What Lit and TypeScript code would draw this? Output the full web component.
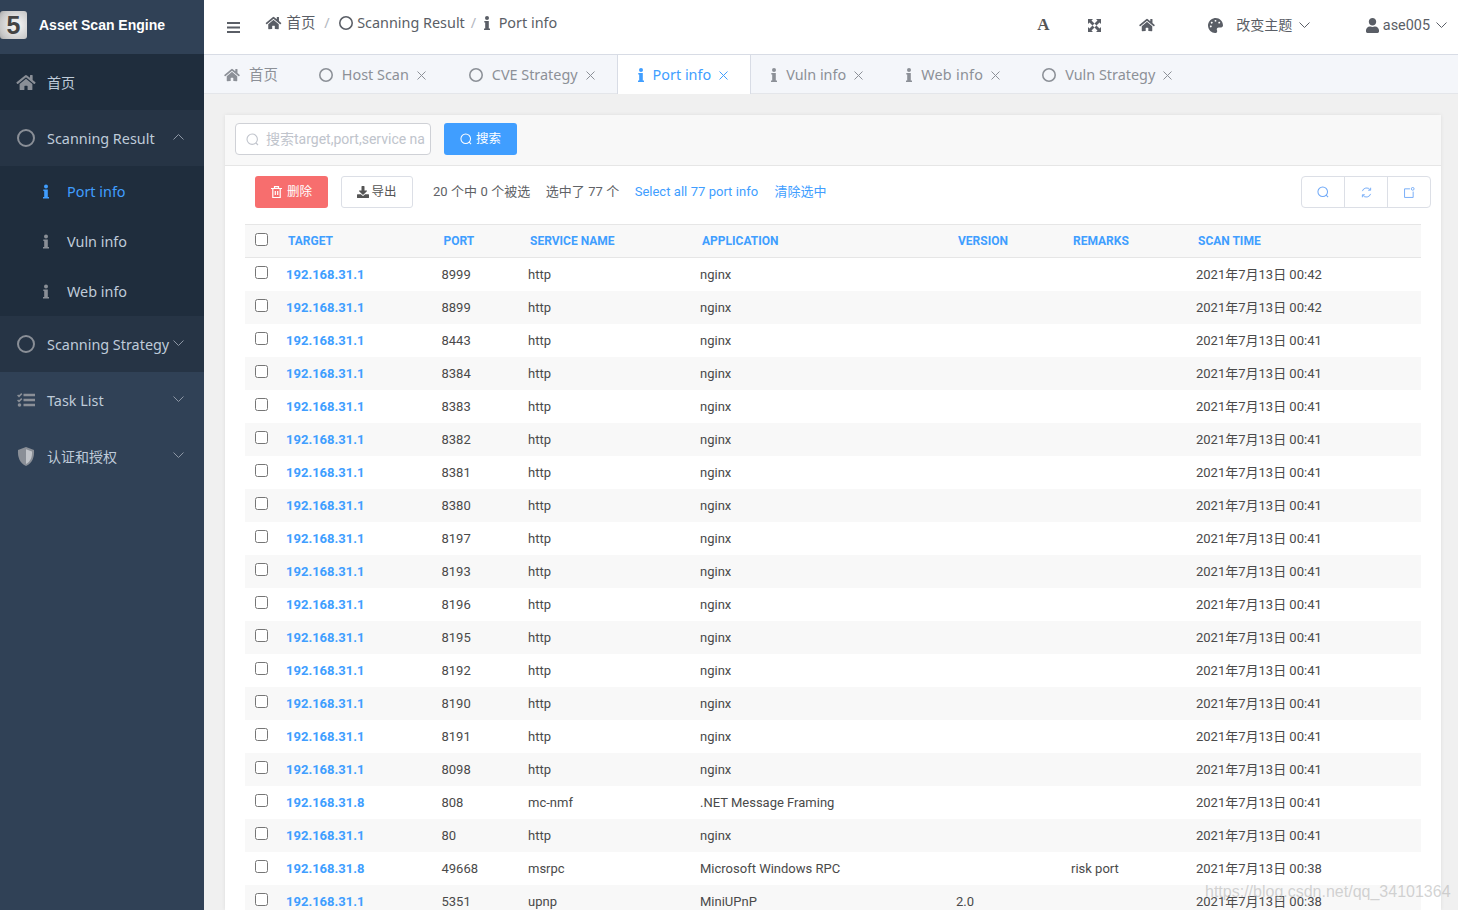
import { LitElement, html, css, svg } from 'lit';
import { customElement } from 'lit/decorators.js';

const HOME = svg`<path d="M280.37 148.26L96 300.11V464a16 16 0 0 0 16 16l112.06-.29a16 16 0 0 0 15.92-16V368a16 16 0 0 1 16-16h64a16 16 0 0 1 16 16v95.64a16 16 0 0 0 16 16.05L464 480a16 16 0 0 0 16-16V300L295.67 148.26a12.19 12.19 0 0 0-15.3 0zM571.6 251.47L488 182.56V44.05a12 12 0 0 0-12-12h-56a12 12 0 0 0-12 12v72.61L318.47 43a48 48 0 0 0-61 0L4.34 251.47a12 12 0 0 0-1.6 16.9l25.5 31A12 12 0 0 0 45.15 301l235.22-193.74a12.19 12.19 0 0 1 15.3 0L530.9 301a12 12 0 0 0 16.9-1.6l25.5-31a12 12 0 0 0-1.7-16.93z"/>`;
const USER = svg`<path d="M224 256c70.7 0 128-57.3 128-128S294.7 0 224 0 96 57.3 96 128s57.3 128 128 128zm89.6 32h-16.7c-22.2 10.2-46.9 16-72.9 16s-50.6-5.8-72.9-16h-16.7C60.2 288 0 348.2 0 422.4V464c0 26.5 21.5 48 48 48h352c26.5 0 48-21.5 48-48v-41.6c0-74.2-60.2-134.4-134.4-134.4z"/>`;
const DOWNLOAD = svg`<path d="M216 0h80c13.3 0 24 10.7 24 24v168h87.7c17.8 0 26.7 21.5 14.1 34.1L269.7 378.3c-7.5 7.5-19.8 7.5-27.3 0L90.1 226.1c-12.6-12.6-3.7-34.1 14.1-34.1H192V24c0-13.3 10.7-24 24-24zm296 376v112c0 13.3-10.7 24-24 24H24c-13.3 0-24-10.7-24-24V376c0-13.3 10.7-24 24-24h146.7l49 49c20.1 20.1 52.5 20.1 72.6 0l49-49H488c13.3 0 24 10.7 24 24z"/>`;
const PALETTE = svg`<path d="M204.3 5C104.9 24.4 24.8 104.3 5.2 203.4c-37 187 131.7 326.4 258.8 306.7 41.2-6.4 61.4-54.6 42.5-91.7-23.1-45.4 9.9-98.4 60.9-98.4h79.7c35.8 0 64.8-29.6 64.9-65.3C511.5 97.1 368.1-26.9 204.3 5zM96 320c-17.7 0-32-14.3-32-32s14.3-32 32-32 32 14.3 32 32-14.3 32-32 32zm32-128c-17.7 0-32-14.3-32-32s14.3-32 32-32 32 14.3 32 32-14.3 32-32 32zm128-64c-17.7 0-32-14.3-32-32s14.3-32 32-32 32 14.3 32 32-14.3 32-32 32zm128 64c-17.7 0-32-14.3-32-32s14.3-32 32-32 32 14.3 32 32-14.3 32-32 32z"/>`;

const icon = (vb: string, body: unknown, w: number, h: number) =>
  html`<svg class="ic" viewBox=${vb} width=${w} height=${h} fill="currentColor">${body}</svg>`;

const home = (w = 16, h = 14) => icon('0 0 576 512', HOME, w, h);
const circle = (s = 14) =>
  html`<svg class="ic" viewBox="0 0 18 18" width=${s} height=${s} fill="none" stroke="currentColor" stroke-width="2"><circle cx="9" cy="9" r="8"/></svg>`;
const info = (w = 6, h = 14) =>
  icon('0 0 6 14', svg`<circle cx="3" cy="2" r="2"/><path d="M.3 5h4.5v7.600H6V14H0v-1.400h1.200V6.400H.3z"/>`, w, h);
const chevron = (up = false) =>
  html`<svg class="ic" viewBox="0 0 11 6" width="11" height="6" fill="none" stroke="currentColor" stroke-width="1"><path d=${up ? 'M.5 5.5l5-5 5 5' : 'M.5.5l5 5 5-5'}/></svg>`;
const close = () =>
  html`<svg class="ic x" viewBox="0 0 9 9" width="9" height="9" fill="none" stroke="currentColor" stroke-width="1"><path d="M.5.5l8 8M8.5.5l-8 8"/></svg>`;
const search = (s = 13) =>
  html`<svg class="ic" viewBox="0 0 13 13" width=${s} height=${s} fill="none" stroke="currentColor" stroke-width="1.1"><circle cx="6.2" cy="6.2" r="5.2"/><path d="M10 10l2 2"/></svg>`;

const TABS = [
  { label: '首页', kind: 'home' },
  { label: 'Host Scan', kind: 'circle', closable: true },
  { label: 'CVE Strategy', kind: 'circle', closable: true },
  { label: 'Port info', kind: 'info', closable: true, active: true },
  { label: 'Vuln info', kind: 'info', closable: true },
  { label: 'Web info', kind: 'info', closable: true },
  { label: 'Vuln Strategy', kind: 'circle', closable: true },
];

const COLS = ['TARGET', 'PORT', 'SERVICE NAME', 'APPLICATION', 'VERSION', 'REMARKS', 'SCAN TIME'];

const d = (t: string) => `2021年7月13日 ${t}`;
const ROWS = [
  ['192.168.31.1', '8999', 'http', 'nginx', '', '', d('00:42')],
  ['192.168.31.1', '8899', 'http', 'nginx', '', '', d('00:42')],
  ['192.168.31.1', '8443', 'http', 'nginx', '', '', d('00:41')],
  ['192.168.31.1', '8384', 'http', 'nginx', '', '', d('00:41')],
  ['192.168.31.1', '8383', 'http', 'nginx', '', '', d('00:41')],
  ['192.168.31.1', '8382', 'http', 'nginx', '', '', d('00:41')],
  ['192.168.31.1', '8381', 'http', 'nginx', '', '', d('00:41')],
  ['192.168.31.1', '8380', 'http', 'nginx', '', '', d('00:41')],
  ['192.168.31.1', '8197', 'http', 'nginx', '', '', d('00:41')],
  ['192.168.31.1', '8193', 'http', 'nginx', '', '', d('00:41')],
  ['192.168.31.1', '8196', 'http', 'nginx', '', '', d('00:41')],
  ['192.168.31.1', '8195', 'http', 'nginx', '', '', d('00:41')],
  ['192.168.31.1', '8192', 'http', 'nginx', '', '', d('00:41')],
  ['192.168.31.1', '8190', 'http', 'nginx', '', '', d('00:41')],
  ['192.168.31.1', '8191', 'http', 'nginx', '', '', d('00:41')],
  ['192.168.31.1', '8098', 'http', 'nginx', '', '', d('00:41')],
  ['192.168.31.8', '808', 'mc-nmf', '.NET Message Framing', '', '', d('00:41')],
  ['192.168.31.1', '80', 'http', 'nginx', '', '', d('00:41')],
  ['192.168.31.8', '49668', 'msrpc', 'Microsoft Windows RPC', '', 'risk port', d('00:38')],
  ['192.168.31.1', '5351', 'upnp', 'MiniUPnP', '2.0', '', d('00:38')],
];

@customElement('app-root')
export class AppRoot extends LitElement {
  static styles = css`
    :host {
      display: flex;
      height: 910px;
      overflow: hidden;
      position: relative;
      background: #f0f0f0;
      font-family: Roboto, 'Noto Sans CJK SC', sans-serif;
      font-size: 13px;
      line-height: 16px;
      color: #4a4a4a;
    }
    .ic { flex: none; display: block; }

    /* left rail */
    .side {
      flex: none;
      width: 204px;
      background: #304156;
      color: #bfcbd9;
      font-family: 'Noto Sans', 'Noto Sans CJK SC', sans-serif;
      font-size: 14.4px;
    }
    .brand {
      height: 54px;
      box-sizing: border-box;
      padding-bottom: 4px;
      display: flex;
      align-items: center;
      gap: 12px;
      color: #fff;
      font: bold 14px 'Liberation Sans', sans-serif;
    }
    .logo {
      width: 27px;
      height: 28px;
      border-radius: 3px;
      background: radial-gradient(circle at 60% 50%, #fafafa, #c9c9c9 75%, #a8a8a8);
      color: #444;
      font: bold 25px/28px 'Liberation Sans', sans-serif;
      text-align: center;
    }
    .item {
      height: 56px;
      display: flex;
      align-items: center;
      padding-right: 20px;
    }
    .item .lead {
      width: 47px;
      flex: none;
      display: flex;
      justify-content: center;
      padding-left: 5px;
      box-sizing: border-box;
      color: #8a8f97;
    }
    .item .name { flex: 1; white-space: nowrap; padding-top: 2px; }
    .item .name.cjk { font-size: 14px; }
    .item .chev { flex: none; color: #8d97a5; margin-top: -3px; }
    .item.dark { background: #1f2d3d; }
    .item.open { background: #263445; }
    .sub {
      height: 50px;
      display: flex;
      align-items: center;
      background: #1f2d3d;
    }
    .sub span { padding-top: 2px; }
    .sub .ic { margin-left: 43px; margin-right: 18px; color: #8a8f97; }
    .sub.on { color: #409eff; }
    .sub.on .ic { color: #409eff; }

    .main { flex: 1; min-width: 0; display: flex; flex-direction: column; }

    /* top bar */
    .top {
      height: 54px;
      flex: none;
      display: flex;
      align-items: center;
      background: #fff;
      border-bottom: 1px solid #d8dce5;
      color: #5a5e66;
      font-family: 'Noto Sans', 'Noto Sans CJK SC', sans-serif;
      font-size: 14.4px;
    }
    .burger { margin: 0 25px 0 23px; }
    .crumbs { display: flex; align-items: center; margin-top: -8px; }
    .crumbs .ic { margin-right: 4.5px; }
    .crumbs .sep { color: #b4b8bf; margin: 0 9px 0 9px; }
    .crumbs .sep.second { margin: 0 8px 0 6px; }
    .crumbs .info { margin-right: 4px; }
    .acts {
      margin: -4px 0 0 auto;
      padding-right: 11px;
      display: flex;
      align-items: center;
      font-family: Roboto, 'Noto Sans CJK SC', sans-serif;
    }
    .acts .a { font: bold 17px 'Liberation Serif', serif; width: 12px; margin-right: 39px; color: #555; text-align: center; }
    .acts .expand { margin-right: 38px; }
    .acts .hm { margin-right: 53px; }
    .acts .theme { margin: 0 13px 0 0; }
    .acts .theme-label { font-size: 14px; margin-right: 6.5px; }
    .acts .user-ic { margin: 0 4px 0 56px; }
    .acts .uname { margin: 2px 6px 0 0; }

    /* open tabs */
    .tabs {
      height: 38px;
      flex: none;
      display: flex;
      background: #f4f6fa;
      border-bottom: 1px solid #e4e6ea;
      color: #8c9097;
      font-family: 'Noto Sans', 'Noto Sans CJK SC', sans-serif;
      font-size: 14.4px;
    }
    .tab {
      display: flex;
      align-items: center;
      padding: 2px 22px 0 20px;
      white-space: nowrap;
    }
    .tab:first-child { padding-right: 21px; }
    .tab:nth-child(2),
    .tab:nth-child(5) { padding-right: 23px; }
    .tab:nth-child(6) { letter-spacing: 0.25px; }
    .tab .lead { margin-right: 9px; }
    .tab .x { margin-left: 8px; }
    .tab.on {
      background: #fff;
      color: #409eff;
      border-left: 1px solid #d8dce5;
      border-right: 1px solid #d8dce5;
      padding: 1px 22px 0 20px;
      margin-bottom: -1px;
    }

    /* card */
    .body { flex: 1; min-height: 0; padding: 21px 17px 0 21px; }
    .card {
      background: #fff;
      height: 100%;
      box-shadow: 0 0 4px rgba(0, 0, 0, 0.08);
    }
    .filter {
      height: 51px;
      box-sizing: border-box;
      display: flex;
      align-items: flex-start;
      gap: 13px;
      padding: 8px 10px 0;
      background: #f8f8f8;
      border-bottom: 1px solid #e6e6e6;
    }
    .input {
      width: 196px;
      height: 32px;
      box-sizing: border-box;
      display: flex;
      align-items: center;
      gap: 7px;
      padding-left: 10px;
      background: #fff;
      border: 1px solid #cfd1d6;
      border-radius: 4px;
      color: #c0c4cc;
      font-size: 14px;
      overflow: hidden;
      white-space: nowrap;
    }
    .btn {
      height: 32px;
      box-sizing: border-box;
      display: flex;
      align-items: center;
      justify-content: center;
      gap: 4px;
      border-radius: 3px;
      font-size: 12.5px;
    }
    .btn.primary { width: 73px; background: #409eff; color: #fff; }
    .btn.danger { width: 73px; background: #f76e6e; color: #fff; gap: 5px; }
    .btn.plain { width: 72px; background: #fff; border: 1px solid #dcdfe6; color: #555; gap: 2px; }
    .tools {
      height: 32px;
      display: flex;
      align-items: center;
      gap: 13px;
      padding: 10px 10px 0 30px;
    }
    .count { margin-left: 7px; display: flex; gap: 15.5px; color: #606266; white-space: nowrap; word-spacing: 0.2px; }
    .count a { color: #409eff; }
    .count .clear { margin-left: 1px; }
    .group {
      margin-left: auto;
      display: flex;
      border: 1px solid #dcdfe6;
      border-radius: 4px;
      color: #6ea8f7;
    }
    .group span {
      width: 42px;
      height: 30px;
      display: flex;
      align-items: center;
      justify-content: center;
    }
    .group span + span { border-left: 1px solid #dcdfe6; }

    /* table */
    .table { margin: 16px 20px 0; }
    .row {
      height: 33px;
      display: grid;
      grid-template-columns: 41px 155.5px 86.5px 172px 256px 115px 125px 225px;
      align-items: center;
      white-space: nowrap;
    }
    .row:nth-child(odd) { background: #f8f8f8; }
    .row input { margin: 0 0 5px 10px; width: 13px; height: 13px; }
    .row.head {
      height: 34px;
      box-sizing: border-box;
      background: #f8f8f8;
      border-top: 1px solid #e6e6e6;
      border-bottom: 1px solid #e6e6e6;
      color: #409eff;
      font-size: 12px;
      font-weight: 700;
    }
    .row.head input { margin-bottom: 3px; }
    .head span { padding-left: 2px; }
    .ip { color: #409eff; font-weight: 700; }

    .mark {
      position: absolute;
      left: 1205px;
      top: 883px;
      color: rgba(175, 175, 175, 0.55);
      font: 16px 'Liberation Sans', sans-serif;
      white-space: nowrap;
      pointer-events: none;
    }
  `;

  private tabLead(kind: string) {
    if (kind === 'home') return home();
    if (kind === 'info') return info();
    return circle();
  }

  render() {
    return html`
      <aside class="side">
        <div class="brand"><div class="logo">5</div>Asset Scan Engine</div>
        <div class="item dark"><span class="lead">${home(20, 17)}</span><span class="name cjk">首页</span></div>
        <div class="item open">
          <span class="lead">${circle(18)}</span><span class="name">Scanning Result</span>
          <span class="chev">${chevron(true)}</span>
        </div>
        <div class="sub on">${info(6, 17)}<span>Port info</span></div>
        <div class="sub">${info(6, 17)}<span>Vuln info</span></div>
        <div class="sub">${info(6, 17)}<span>Web info</span></div>
        <div class="item open">
          <span class="lead">${circle(18)}</span><span class="name">Scanning Strategy</span>
          <span class="chev">${chevron()}</span>
        </div>
        <div class="item">
          <span class="lead">
            <svg class="ic" viewBox="0 0 18 14" width="18" height="14" fill="currentColor">
              <path d="M6.500 .8H18v2.400H6.500zM6.500 5.800H18v2.400H6.500zM6.500 10.800H18v2.400H6.500z" />
              <path d="M.6 2l1.400 1.400 2.800-2.800" fill="none" stroke="currentColor" stroke-width="1.500" />
              <path d="M.6 7l1.400 1.400 2.800-2.800" fill="none" stroke="currentColor" stroke-width="1.500" />
              <circle cx="2.500" cy="12" r="1.800" />
            </svg>
          </span>
          <span class="name">Task List</span>
          <span class="chev">${chevron()}</span>
        </div>
        <div class="item">
          <span class="lead">
            <svg class="ic" viewBox="0 0 18 19" width="18" height="19">
              <path fill="currentColor" d="M9 0l8 3c.5 7-1.500 13-8 16C2.500 16 .5 10 1 3z" />
              <path fill="#c2c5ca" d="M9 2.200l6 2.300c.2 5.500-1.200 10-6 12.400z" />
            </svg>
          </span>
          <span class="name cjk">认证和授权</span>
          <span class="chev">${chevron()}</span>
        </div>
      </aside>

      <div class="main">
        <header class="top">
          <svg class="ic burger" viewBox="0 0 13 11" width="13" height="11" fill="currentColor">
            <path d="M0 0h13v2H0zM0 4.500h13v2H0zM0 9h13v2H0z" />
          </svg>
          <nav class="crumbs">
            ${home(17, 14)}<span>首页</span><span class="sep">/</span>
            ${circle(14)}<span>Scanning Result</span><span class="sep second">/</span>
            <span class="info">${info(6, 14)}</span><span>Port info</span>
          </nav>
          <div class="acts">
            <span class="a">A</span>
            <svg class="ic expand" viewBox="0 0 13 13" width="13" height="13" fill="currentColor">
              <path d="M0 0h5L3.500 1.500 6.500 4.500 4.500 6.500 1.500 3.500 0 5zM13 0v5l-1.500-1.500-3 3-2-2 3-3L8 0zM0 13V8l1.500 1.500 3-3 2 2-3 3L5 13zM13 13H8l1.500-1.500-3-3 2-2 3 3L13 8z" />
            </svg>
            <span class="hm">${home(16, 14)}</span>
            <span class="theme">${icon('0 0 512 512', PALETTE, 15, 15)}</span>
            <span class="theme-label">改变主题</span>
            ${chevron()}
            <span class="user-ic">${icon('0 0 448 512', USER, 13, 15)}</span>
            <span class="uname">ase005</span>
            ${chevron()}
          </div>
        </header>

        <div class="tabs">
          ${TABS.map(
            (t) => html`<div class="tab ${t.active ? 'on' : ''}">
              <span class="lead">${this.tabLead(t.kind)}</span>${t.label}${t.closable ? close() : ''}
            </div>`,
          )}
        </div>

        <div class="body">
          <section class="card">
            <div class="filter">
              <div class="input">${search(13)}<span>搜索target,port,service na</span></div>
              <div class="btn primary">${search(12)}<span>搜索</span></div>
            </div>
            <div class="tools">
              <div class="btn danger">
                <svg class="ic" viewBox="0 0 11 12" width="11" height="12" fill="none" stroke="currentColor" stroke-width="1.2">
                  <path d="M0 2.500h11M3.500 2.500V.6h4v1.900M1.800 2.500v9h7.400v-9M4.300 5v4M6.700 5v4" />
                </svg>
                <span>删除</span>
              </div>
              <div class="btn plain">${icon('0 0 512 512', DOWNLOAD, 12, 12)}<span>导出</span></div>
              <div class="count">
                <span>20 个中 0 个被选</span><span>选中了 77 个</span>
                <a>Select all 77 port info</a><a class="clear">清除选中</a>
              </div>
              <div class="group">
                <span>${search(12)}</span>
                <span>
                  <svg class="ic" viewBox="0 0 12 12" width="11" height="11" fill="none" stroke="currentColor" stroke-width="1">
                    <path d="M1.500 4.500a4.800 4.800 0 0 1 8.500-1.500M10.500 7.500a4.800 4.800 0 0 1-8.500 1.500M10.500 .8V3.500H7.800M1.500 11.200V8.500h2.700" />
                  </svg>
                </span>
                <span>
                  <svg class="ic" viewBox="0 0 12 12" width="11" height="11" fill="none" stroke="currentColor" stroke-width="1">
                    <path d="M6.500 2H.6v9.400h9.400V5" /><circle cx="9.500" cy="2" r="1.500" />
                  </svg>
                </span>
              </div>
            </div>
            <div class="table">
              <div class="row head">
                <input type="checkbox" />
                ${COLS.map((c) => html`<span>${c}</span>`)}
              </div>
              ${ROWS.map(
                (r) => html`<div class="row">
                  <input type="checkbox" />
                  <a class="ip">${r[0]}</a>
                  ${r.slice(1).map((c) => html`<span>${c}</span>`)}
                </div>`,
              )}
            </div>
          </section>
        </div>
      </div>
      <div class="mark">https://blog.csdn.net/qq_34101364</div>
    `;
  }
}
